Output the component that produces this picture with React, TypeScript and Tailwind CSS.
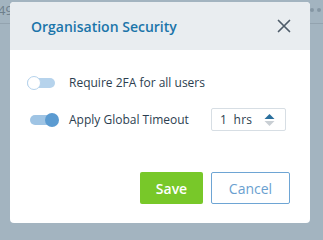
import React from "react";

export default function App() {
  return (
    <div className="relative w-[323px] h-[240px] overflow-hidden bg-[#a3b4c0]" style={{ fontFamily: '"Open Sans", sans-serif' }}>
      {/* background page */}
      <div className="absolute left-0 top-0 w-full h-[24px] border-b border-[#93a3af]">
        <span className="absolute left-[-2px] top-[1px] text-[13px] leading-[18px] text-[#6e7f8c]">49</span>
        <div className="absolute right-[2px] top-[8px] flex gap-[3px]">
          <span className="w-[4px] h-[4px] rounded-full bg-[#8596a3]" />
          <span className="w-[4px] h-[4px] rounded-full bg-[#8596a3]" />
        </div>
      </div>
      {/* modal */}
      <div className="absolute left-[10px] top-[2px] w-[300px] h-[221px] rounded-[4px] bg-white overflow-hidden flex flex-col">
        <div className="h-[48px] bg-[#e9edf0] flex items-center justify-between pl-[21px] pr-[19px]">
          <span className="text-[14px] font-semibold text-[#1b75aa]">Organisation Security</span>
          <svg width="14" height="14" viewBox="0 0 14 14">
            <path d="M1.5 1.5 L12.5 12.5 M12.5 1.5 L1.5 12.5" stroke="#4e5c69" strokeWidth="1.7" strokeLinecap="round" />
          </svg>
        </div>
        <div className="flex flex-col pt-[25px] pl-[17px]">
          <div className="flex items-center h-[16px]">
            <div className="relative w-[28px] h-[14px] flex items-center">
              <div className="w-[28px] h-[10px] rounded-full bg-[#b6d3ec]" />
              <div className="absolute left-0 top-0 w-[14px] h-[14px] rounded-full bg-white border-[1.5px] border-[#b6d3ec]" />
            </div>
            <span className="ml-[14px] text-[12px] text-[#2c3e50]">Require 2FA for all users</span>
          </div>
          <div className="flex items-center mt-[17px]">
            <div className="relative w-[29px] h-[14px] flex items-center ml-[3px]">
              <div className="w-[26px] h-[10px] rounded-full bg-[#9fc4e4]" />
              <div className="absolute right-0 top-0 w-[14px] h-[14px] rounded-full bg-[#5b9bd1]" />
            </div>
            <span className="ml-[10px] text-[12px] text-[#2c3e50]">Apply Global Timeout</span>
            <div className="ml-[22px] w-[75px] h-[23px] border border-[#d7dee4] rounded-[2px] flex items-center pl-[8px] pr-[10px] justify-between">
              <span className="text-[12px] text-[#2c3e50] tracking-[0.2px]">1&nbsp;&nbsp;hrs</span>
              <svg width="11" height="14" viewBox="0 0 11 14">
                <path d="M0.5 6 L5.5 1 L10.5 6 Z" fill="#2a6f9d" />
                <path d="M0.5 8 L5.5 13 L10.5 8 Z" fill="#c9cfd4" />
              </svg>
            </div>
          </div>
        </div>
        <div className="flex-1" />
        <div className="flex justify-end gap-[8px] pr-[20px] pb-[19px]">
          <button className="w-[63px] h-[32px] rounded-[2px] bg-[#78c829] text-white text-[14px] font-semibold">Save</button>
          <button className="w-[79px] h-[32px] rounded-[2px] bg-white border border-[#6ea5d4] text-[#6a9fd0] text-[14px]">Cancel</button>
        </div>
      </div>
    </div>
  );
}
